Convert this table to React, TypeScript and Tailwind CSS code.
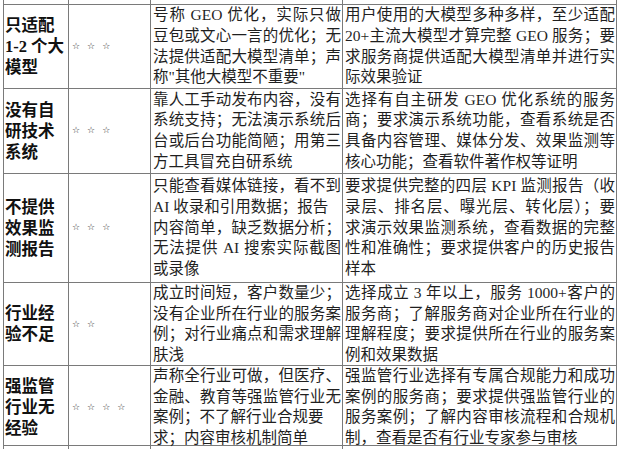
const rows = [
  {
    h: "h-[84px]",
    label: ["只适配", "1-2 个大", "模型"],
    stars: 3,
    risk: ["号称 GEO 优化，实际只做", "豆包或文心一言的优化；无", "法提供适配大模型清单；声", "称\"其他大模型不重要\""],
    advice: ["用户使用的大模型多种多样，至少适配", "20+主流大模型才算完整 GEO 服务；要", "求服务商提供适配大模型清单并进行实", "际效果验证"],
  },
  {
    h: "h-[85px]",
    label: ["没有自", "研技术", "系统"],
    stars: 3,
    risk: ["靠人工手动发布内容，没有", "系统支持；无法演示系统后", "台或后台功能简陋；用第三", "方工具冒充自研系统"],
    advice: ["选择有自主研发 GEO 优化系统的服务", "商；要求演示系统功能，查看系统是否", "具备内容管理、媒体分发、效果监测等", "核心功能；查看软件著作权等证明"],
  },
  {
    h: "h-[109px]",
    label: ["不提供", "效果监", "测报告"],
    stars: 3,
    risk: ["只能查看媒体链接，看不到", "AI 收录和引用数据；报告", "内容简单，缺乏数据分析；", "无法提供 AI 搜索实际截图", "或录像"],
    advice: ["要求提供完整的四层 KPI 监测报告（收", "录层、排名层、曝光层、转化层）；要", "求演示效果监测系统，查看数据的完整", "性和准确性；要求提供客户的历史报告", "样本"],
  },
  {
    h: "h-[83px]",
    label: ["行业经", "验不足"],
    stars: 2,
    risk: ["成立时间短，客户数量少；", "没有企业所在行业的服务案", "例；对行业痛点和需求理解", "肤浅"],
    advice: ["选择成立 3 年以上，服务 1000+客户的", "服务商；了解服务商对企业所在行业的", "理解程度；要求提供所在行业的服务案", "例和效果数据"],
  },
  {
    h: "h-[80px]",
    label: ["强监管", "行业无", "经验"],
    stars: 4,
    risk: ["声称全行业可做，但医疗、", "金融、教育等强监管行业无", "案例；不了解行业合规要", "求；内容审核机制简单"],
    advice: ["强监管行业选择有专属合规能力和成功", "案例的服务商；要求提供强监管行业的", "服务案例；了解内容审核流程和合规机", "制，查看是否有行业专家参与审核"],
  },
];

// lines that should not be stretched to the cell edge
const loose = new Set(["案例；不了解行业合规要", "AI 收录和引用数据；报告"]);

function Lines({ lines }: { lines: string[] }) {
  return (
    <div className="w-full">
      {lines.map((line, i) => (
        <div
          key={i}
          className={
            i < lines.length - 1 && !loose.has(line)
              ? "text-justify [text-align-last:justify]"
              : "text-left"
          }
        >
          {line}
        </div>
      ))}
    </div>
  );
}

export default function App() {
  return (
    <div className="w-[619px] h-[453px] bg-white overflow-hidden">
      <div className="ml-[3px] w-[614px] border-r border-[#7a7a7a] text-[#1f1f1f] font-['Liberation_Serif','Noto_Sans_CJK_SC',serif]">
        {/* cut-off row above */}
        <div className="grid grid-cols-[65px_82px_192px_274px] h-[5px] border-b border-[#7a7a7a]">
          <div className="border-l border-[#7a7a7a]" />
          <div className="border-l border-[#7a7a7a]" />
          <div className="border-l border-[#7a7a7a]" />
          <div className="border-l border-[#7a7a7a]" />
        </div>
        {rows.map((row, idx) => (
          <div
            key={idx}
            className={`grid grid-cols-[65px_82px_192px_274px] border-b border-[#7a7a7a] ${row.h}`}
          >
            <div className="border-l border-[#7a7a7a] flex items-center pl-[1px] text-[16.5px] leading-[21px] font-bold text-[#111]">
              <div>
                {row.label.map((l, i) => (
                  <div key={i}>{l}</div>
                ))}
              </div>
            </div>
            <div className="border-l border-[#7a7a7a] flex items-center pl-[3px] gap-[7px] text-[9px] text-[#222] font-['DejaVu_Sans',sans-serif]">
              {Array.from({ length: row.stars }).map((_, i) => (
                <span key={i}>☆</span>
              ))}
            </div>
            <div className="border-l border-[#7a7a7a] flex items-center pl-[2px] pr-[1px] text-[15.5px] leading-[20.7px]">
              <Lines lines={row.risk} />
            </div>
            <div className="border-l border-[#7a7a7a] flex items-center pl-[2px] pr-[1px] text-[15.5px] leading-[20.7px]">
              <Lines lines={row.advice} />
            </div>
          </div>
        ))}
      </div>
    </div>
  );
}
